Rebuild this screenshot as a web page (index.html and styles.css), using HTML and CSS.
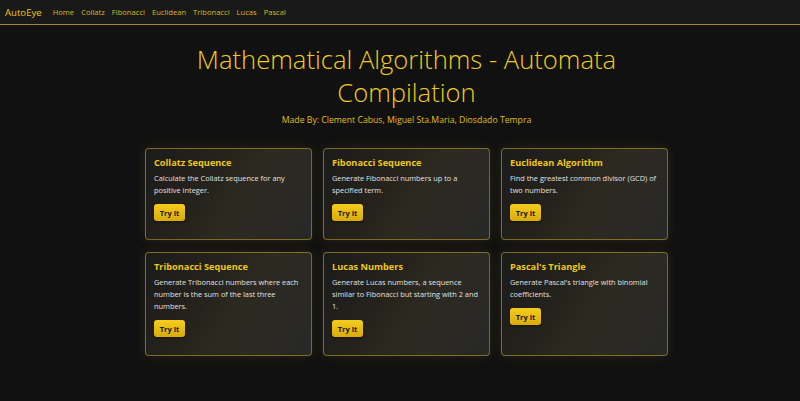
FILE: index.html
```html
<!DOCTYPE html>
<html>
<head>
<meta charset="utf-8">
<link rel="stylesheet" href="styles.css">
</head>
<body>
<nav class="nav">
  <span class="brand">AutoEye</span>
  <a class="link" href="#">Home</a>
  <a class="link" href="#">Collatz</a>
  <a class="link" href="#">Fibonacci</a>
  <a class="link" href="#">Euclidean</a>
  <a class="link" href="#">Tribonacci</a>
  <a class="link" href="#">Lucas</a>
  <a class="link" href="#">Pascal</a>
</nav>
<main class="main">
  <h1 class="title">Mathematical Algorithms - Automata<br>Compilation</h1>
  <p class="authors">Made By: Clement Cabus, Miguel Sta.Maria, Diosdado Tempra</p>
  <div class="grid">
    <div class="card">
      <h2 class="card-title">Collatz Sequence</h2>
      <p class="card-text">Calculate the Collatz sequence for any positive integer.</p>
      <button class="btn">Try it</button>
    </div>
    <div class="card">
      <h2 class="card-title">Fibonacci Sequence</h2>
      <p class="card-text">Generate Fibonacci numbers up to a specified term.</p>
      <button class="btn">Try it</button>
    </div>
    <div class="card">
      <h2 class="card-title">Euclidean Algorithm</h2>
      <p class="card-text">Find the greatest common divisor (GCD) of two numbers.</p>
      <button class="btn">Try it</button>
    </div>
    <div class="card">
      <h2 class="card-title">Tribonacci Sequence</h2>
      <p class="card-text">Generate Tribonacci numbers where each number is the sum of the last three numbers.</p>
      <button class="btn">Try it</button>
    </div>
    <div class="card">
      <h2 class="card-title">Lucas Numbers</h2>
      <p class="card-text">Generate Lucas numbers, a sequence similar to Fibonacci but starting with 2 and 1.</p>
      <button class="btn">Try it</button>
    </div>
    <div class="card">
      <h2 class="card-title">Pascal's Triangle</h2>
      <p class="card-text">Generate Pascal's triangle with binomial coefficients.</p>
      <button class="btn">Try it</button>
    </div>
  </div>
</main>
</body>
</html>
```
FILE: styles.css
```css
html, body {
  margin: 0;
  padding: 0;
  background: #111111;
  font-family: "Open Sans", "Noto Sans", sans-serif;
  height: 100%;
}
.nav {
  height: 25px;
  background: #191919;
  border-bottom: 1px solid #a48a2a;
  display: flex;
  align-items: center;
  padding: 0 5px;
  box-sizing: border-box;
}
.brand {
  color: #ecc81a;
  font-size: 9.6px;
  margin-right: 11px;
}
.link {
  color: #d8b81c;
  font-size: 7.6px;
  text-decoration: none;
  margin-right: 7px;
}
.main {
  padding-left: 13px;
  display: flex;
  flex-direction: column;
  align-items: center;
}
.title {
  margin: 18px 0 0;
  font-weight: 300;
  font-size: 25.6px;
  line-height: 33px;
  color: #f0cc1c;
  text-align: center;
}
.authors {
  margin: 5px 0 0;
  font-size: 8.7px;
  color: #e0be1a;
}
.grid {
  margin-top: 22px;
  display: grid;
  grid-template-columns: repeat(3, 167px);
  column-gap: 11px;
  row-gap: 12px;
}
.card {
  border: 1px solid rgba(200, 165, 40, 0.55);
  border-radius: 4px;
  background: linear-gradient(120deg, #1b1b1b 0%, #25231b 40%, #2c2a20 55%, #282828 100%);
  box-shadow: 0 0 12px rgba(200, 165, 40, 0.12);
  padding: 7px 8px 18px;
  display: flex;
  flex-direction: column;
  align-items: flex-start;
}
.card-title {
  margin: 0;
  font-size: 9.2px;
  line-height: 14px;
  font-weight: 700;
  color: #efc81a;
}
.card-text {
  margin: 2px 0 0;
  font-size: 7.4px;
  line-height: 12px;
  color: #e0e0e0;
}
.btn {
  margin-top: 8px;
  width: 31px;
  height: 17px;
  padding: 0;
  border: none;
  border-radius: 3px;
  background: linear-gradient(180deg, #f4cd1c 0%, #d9ab0c 100%);
  color: #1b1b1b;
  font-family: "Open Sans", "Noto Sans", sans-serif;
  font-weight: 700;
  font-size: 7.5px;
  box-shadow: 0 1px 3px rgba(0,0,0,0.4);
}
```
